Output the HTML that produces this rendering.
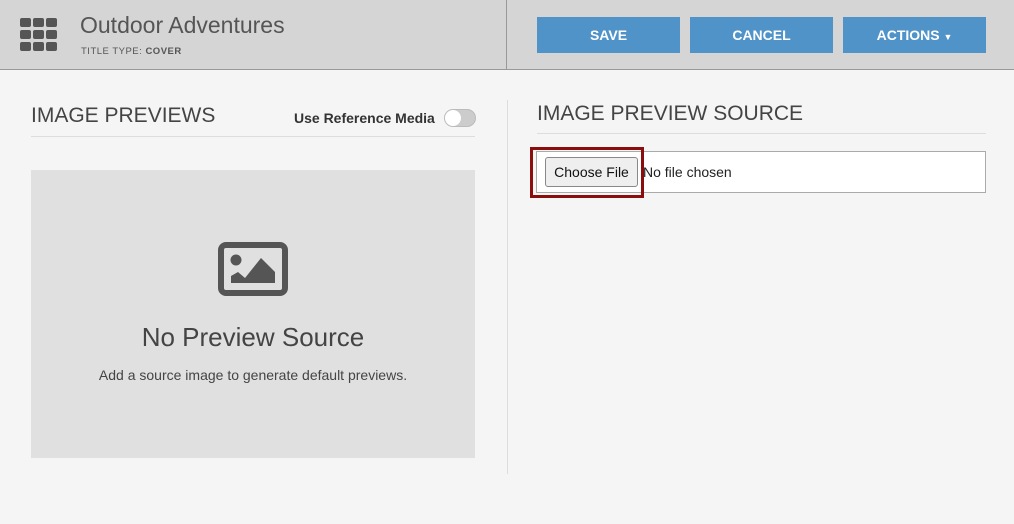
<!DOCTYPE html>
<html><head><style>
*{box-sizing:border-box;margin:0;padding:0}
body{width:1014px;height:524px;background:#f5f5f5;font-family:"Liberation Sans",sans-serif;position:relative;overflow:hidden;color:#333}
.hdr{position:absolute;left:0;top:0;width:1014px;height:70px;background:#d5d5d5;border-bottom:1px solid #999}
.vd{position:absolute;left:506px;top:0;width:1px;height:69px;background:#999}
.grid{position:absolute;left:20px;top:18px;width:38px;height:34px}
.grid i{position:absolute;width:11px;height:9px;background:#555;border-radius:2px}
.title{position:absolute;left:80px;top:12px;font-size:23px;color:#555;font-weight:300}
.sub{position:absolute;left:81px;top:46px;font-size:9.5px;color:#555;letter-spacing:.5px}
.btn{position:absolute;top:17px;width:143px;height:36px;background:#4f93c9;color:#fff;font-size:14px;font-weight:bold;text-align:center;line-height:36px}
h2{position:absolute;font-weight:normal;font-size:21px;color:#444}
.line{position:absolute;height:1px;background:#ddd}
.prev{position:absolute;left:31px;top:170px;width:444px;height:288px;background:#e0e0e0;text-align:center}
</style></head><body>
<div class="hdr"></div><div class="vd"></div>
<div class="grid">
<i style="left:0;top:0"></i><i style="left:13px;top:0"></i><i style="left:26px;top:0"></i>
<i style="left:0;top:12px"></i><i style="left:13px;top:12px"></i><i style="left:26px;top:12px"></i>
<i style="left:0;top:24px"></i><i style="left:13px;top:24px"></i><i style="left:26px;top:24px"></i>
</div>
<div class="title">Outdoor Adventures</div>
<div class="sub">TITLE TYPE: <b>COVER</b></div>
<div class="btn" style="left:537px">SAVE</div>
<div class="btn" style="left:690px">CANCEL</div>
<div class="btn" style="left:843px">ACTIONS <span style="font-size:9px">▼</span></div>

<h2 style="left:31px;top:104px">IMAGE PREVIEWS</h2>
<div style="position:absolute;left:294px;top:110px;font-size:14px;font-weight:bold;color:#333">Use Reference Media</div>
<div style="position:absolute;left:444px;top:109px;width:32px;height:18px;border-radius:9px;background:#ccc;border:1px solid #bbb"><div style="width:16px;height:16px;border-radius:50%;background:#fff"></div></div>
<div class="line" style="left:31px;top:136px;width:444px"></div>
<div style="position:absolute;left:507px;top:100px;width:1px;height:374px;background:#ddd"></div>
<div class="prev">
<svg style="position:absolute;left:187px;top:72px" width="70" height="54" viewBox="0 0 70 54">
<rect x="3" y="3" width="64" height="48" rx="5" fill="none" stroke="#555" stroke-width="6"/>
<circle cx="18" cy="18" r="5.5" fill="#555"/>
<polygon points="13,41 13,34 20,30 27,36 43,16 57,30 57,41" fill="#555"/>
</svg>
<div style="position:absolute;left:0;width:444px;top:152px;font-size:26px;color:#444">No Preview Source</div>
<div style="position:absolute;left:0;width:444px;top:197px;font-size:14px;color:#444">Add a source image to generate default previews.</div>
</div>

<h2 style="left:537px;top:102px">IMAGE PREVIEW SOURCE</h2>
<div class="line" style="left:537px;top:133px;width:449px"></div>
<div style="position:absolute;left:536px;top:151px;width:450px;height:42px;background:#fff;border:1px solid #aaa"></div>
<div style="position:absolute;left:530px;top:147px;width:114px;height:51px;border:3px solid #8b0e0e"></div>
<div style="position:absolute;left:545px;top:157px;width:93px;height:30px;background:#efefef;border:1px solid #888;border-radius:3px;font-size:14px;line-height:28px;text-align:center;color:#111">Choose File</div>
<div style="position:absolute;left:643px;top:164px;font-size:14px;color:#222">No file chosen</div>
</body></html>
